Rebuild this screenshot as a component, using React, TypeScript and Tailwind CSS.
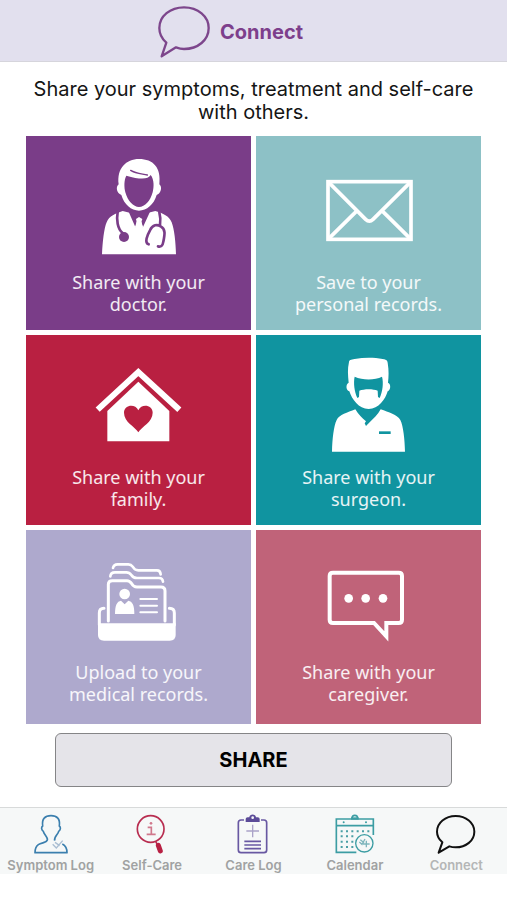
import { useState, type ReactNode } from "react";

type Tile = { label: [string, string]; color: string; icon: ReactNode };

function DoctorIcon() {
  return (
    <svg aria-hidden="true" viewBox="-36 15 363 363" className="h-[121px] w-[121px]">
      <path
        fill="#fff"
        fillRule="evenodd"
        d="M86 118C80 70 108 42 147 42C190 42 214 68 208 118C216 124 214 140 206 146L200 150C192 178 170 197 147 197C124 197 102 178 94 150L88 146C79 140 78 124 86 118ZM109 92C102 104 102 126 106 142C113 168 130 186 147 186C165 186 181 168 188 142C192 126 193 104 182 90C174 104 150 104 109 92Z"
      />
      <path
        fill="#fff"
        d="M36 328C38 290 42 250 50 232C58 212 76 206 98 198L122 204L147 240L172 204L196 198C222 206 238 214 245 232C253 254 257 290 258 328Z"
      />
      <path fill="#7a3d88" d="M116 200L137 248L140 228L135 218H159L154 228L158 248L180 200L147 199Z" />
      <path fill="#fff" d="M138 222L147 216L157 222L154 231L160 248H134L140 231Z" />
      <g fill="none" stroke="#7a3d88" strokeWidth="8" strokeLinecap="round">
        <path d="M122 76C138 86 154 86 172 90" strokeWidth="4" />
        <path d="M83 200C79 224 82 252 98 264" />
        <path d="M208 202C212 216 212 226 210 240" />
        <path d="M176 298C162 294 172 270 180 256C188 238 202 238 212 244C228 252 224 270 220 290C218 304 212 306 204 304" />
      </g>
      <circle cx="102" cy="276" r="15" fill="#7a3d88" />
    </svg>
  );
}

function EnvelopeIcon() {
  return (
    <svg
      aria-hidden="true"
      viewBox="-21 -45 363 363"
      className="h-[121px] w-[121px]"
      fill="none"
      stroke="#fff"
      strokeWidth="11"
    >
      <rect x="39" y="50" width="249" height="173" />
      <path d="M42 53L152 163Q163 174 174 163L285 53M42 220L124 139M285 220L203 139" />
    </svg>
  );
}

function HouseIcon() {
  return (
    <svg aria-hidden="true" viewBox="-21 -18 363 351" className="h-[117px] w-[121px]">
      <path fill="none" stroke="#fff" strokeWidth="18" d="M38 164L160 51L283 164" />
      <path fill="#fff" d="M67 168L160 80L253 168V259H67Z" />
      <path
        fill="#b92041"
        d="M160 232C150 214 117 202 117 173C117 150 150 144 160 166C170 144 203 150 203 173C203 202 170 214 160 232Z"
      />
    </svg>
  );
}

function SurgeonIcon() {
  return (
    <svg aria-hidden="true" viewBox="-36 -3 363 351" className="h-[117px] w-[121px]">
      <path
        fill="#fff"
        fillRule="evenodd"
        d="M86 98C84 76 82 58 87 36C88 30 92 29 104 27C132 22 162 22 188 27C200 29 202 32 203 38C207 62 206 80 204 98C214 103 212 120 203 124C196 148 176 177 146 177C116 177 96 148 88 124C77 120 77 103 86 98ZM104 80C100 98 103 124 112 144L117 141L118 122C132 116 160 116 173 122L174 141L179 144C188 124 191 98 186 80C164 91 128 91 104 80Z"
      />
      <path
        fill="#fff"
        d="M36 305C37 268 41 228 50 210C58 194 82 188 106 178C116 194 126 204 138 214L134 220L138 228L146 220C160 206 174 194 182 178C206 187 232 194 241 210C250 228 254 268 255 305Z"
      />
      <path stroke="#1094a0" strokeWidth="8" d="M177 248H212" />
    </svg>
  );
}

function FoldersIcon() {
  return (
    <svg aria-hidden="true" viewBox="-21 -33 363 351" className="h-[117px] w-[121px]">
      <g fill="none" stroke="#fff" strokeWidth="8" strokeLinecap="round" strokeLinejoin="round">
        <path d="M84 39Q86 28 98 28H130Q138 28 144 36Q149 46 160 46H216Q226 46 227 58" />
        <path d="M76 64Q77 52 90 52H124Q133 52 139 60Q144 69 156 69H222Q233 69 234 80" />
        <path d="M70 198V88Q70 77 82 77H126Q134 77 140 86Q145 96 156 96H228Q240 96 240 108V198" strokeWidth="9" />
        <path d="M57 160Q43 160 43 174V210M253 160Q268 160 268 174V210" strokeWidth="9" />
        <path d="M166 132H216M166 152H216M166 172H216" strokeWidth="6" />
      </g>
      <path fill="#fff" d="M39 205H272V240Q272 257 254 257H57Q39 257 39 240Z" />
      <circle cx="119" cy="117" r="16" fill="#fff" />
      <path fill="#fff" d="M90 177C90 150 96 139 108 137L119 148L130 137C142 139 148 150 148 177Z" />
    </svg>
  );
}

function MessageIcon() {
  return (
    <svg aria-hidden="true" viewBox="-21 -48 363 351" className="h-[117px] w-[121px]">
      <path
        fill="none"
        stroke="#fff"
        strokeWidth="12"
        d="M54 38H251Q261 38 261 48V179Q261 189 251 189H214V229L177 189H54Q44 189 44 179V48Q44 38 54 38Z"
      />
      <g fill="#fff">
        <circle cx="101" cy="115" r="13" />
        <circle cx="152" cy="115" r="13" />
        <circle cx="204" cy="115" r="13" />
      </g>
    </svg>
  );
}

const tiles: Tile[] = [
  { label: ["Share with your", "doctor."], color: "bg-[#7a3d88]", icon: <DoctorIcon /> },
  { label: ["Save to your", "personal records."], color: "bg-[#8dc1c6]", icon: <EnvelopeIcon /> },
  { label: ["Share with your", "family."], color: "bg-[#b92041]", icon: <HouseIcon /> },
  { label: ["Share with your", "surgeon."], color: "bg-[#1094a0]", icon: <SurgeonIcon /> },
  { label: ["Upload to your", "medical records."], color: "bg-[#aea9cd]", icon: <FoldersIcon /> },
  { label: ["Share with your", "caregiver."], color: "bg-[#c06379]", icon: <MessageIcon /> },
];

const tabs: { label: string; icon: ReactNode }[] = [
  {
    label: "Symptom Log",
    icon: (
      <svg aria-hidden="true" viewBox="92 42 120 120" className="size-10" fill="none">
        <path
          stroke="#3b7fae"
          strokeWidth="5"
          strokeLinejoin="round"
          d="M163 122C160 110 173 104 175 94C181 90 182 82 177 78C180 56 170 47 152 47C134 47 124 56 127 78C122 82 123 90 129 94C131 104 144 112 141 120C138 129 124 127 114 134C106 140 104 148 104 158H200C200 148 198 138 186 132"
        />
        <path stroke="#a9bdd2" strokeWidth="4" d="M157 133L168 144L187 122M164 127L178 137" />
      </svg>
    ),
  },
  {
    label: "Self-Care",
    icon: (
      <svg aria-hidden="true" viewBox="396 42 120 120" className="size-10" fill="none">
        <circle cx="452" cy="87" r="40" stroke="#b82d50" strokeWidth="5" />
        <path stroke="#b82d50" strokeWidth="5" d="M467 124L472 134" />
        <path stroke="#b82043" strokeWidth="15" strokeLinecap="round" d="M475 136L481 153" />
        <path stroke="#d0788c" strokeWidth="5" d="M443 82H454V103M440 103H467" />
        <circle cx="453" cy="70" r="4" fill="#d0788c" />
      </svg>
    ),
  },
  {
    label: "Care Log",
    icon: (
      <svg aria-hidden="true" viewBox="-50 42 120 120" className="size-10" fill="none">
        <path stroke="#6858a2" strokeWidth="5" d="M-17 60H-26Q-34 60-34 68V150Q-34 158-26 158H43Q51 158 51 150V68Q51 60 43 60H34" />
        <path fill="#5b4b98" fillRule="evenodd" d="M-12 66V57Q-12 52-6 52H-1C0 41 18 41 19 52H24Q30 52 30 57V66ZM5 53A4 4 0 1 0 13 53A4 4 0 1 0 5 53Z" />
        <path stroke="#aaa3c8" strokeWidth="4" d="M9 74V112M-10 93H28" />
        <path stroke="#6858a2" strokeWidth="5" d="M-16 124H34M-16 135H34M-16 146H34" />
      </svg>
    ),
  },
  {
    label: "Calendar",
    icon: (
      <svg aria-hidden="true" viewBox="255 42 120 120" className="size-10" fill="none">
        <g stroke="#3c9da3" strokeWidth="5">
          <path d="M319 157H259V57H370V105M259 77H370" />
          <circle cx="343" cy="130" r="26" strokeWidth="4" />
          <path d="M306 56C306 43 323 43 323 56" />
        </g>
        <path fill="#3c9da3" d="M303 52H326V59H303Z" />
        <circle cx="281" cy="67" r="3" fill="#3c9da3" />
        <circle cx="348" cy="67" r="3" fill="#3c9da3" />
        <g stroke="#4b9fa5" strokeWidth="6" strokeDasharray="6 10">
          <path d="M272 94H360M272 109H318M272 125H312M272 141H312" />
        </g>
        <path stroke="#7fb6bd" strokeWidth="4" d="M328 126L336 133L345 117M331 119L342 128M349 122V142M339 132H359" />
      </svg>
    ),
  },
  {
    label: "Connect",
    icon: (
      <svg aria-hidden="true" viewBox="559 42 120 120" className="size-10" fill="none">
        <path
          stroke="#111"
          strokeWidth="6"
          strokeLinejoin="round"
          d="M578 127C566 116 562 108 562 95C562 68 587 48 618 48C649 48 674 68 674 95C674 122 649 142 618 142C610 142 605 141 599 139L567 158Z"
        />
      </svg>
    ),
  },
];

export default function App() {
  const [active, setActive] = useState("Connect");

  return (
    <div className="bg-white font-['Inter',sans-serif] text-[#151515]">
      <header className="flex h-[62px] items-center justify-center gap-[10px] border-b border-[#d6d5dc] bg-[#e2e0ee] pt-[3px] pr-[46px]">
        <svg aria-hidden="true" viewBox="474 18 156 156" className="size-[52px]" fill="none">
          <path
            stroke="#7d468c"
            strokeWidth="7"
            strokeLinejoin="round"
            d="M499 128C484 115 478 102 478 84C478 48 511 22 552 22C594 22 626 49 626 84C626 120 594 147 552 147C543 147 536 145 528 142L485 169Z"
          />
        </svg>
        <h1 className="text-[20px] font-bold text-[#7d3f8c]">Connect</h1>
      </header>

      <main className="px-[26px]">
        <p className="pt-4 pb-3 text-center text-[20px] leading-[23px]">
          Share your symptoms, treatment and self-care with others.
        </p>

        <div className="grid grid-cols-2 grid-rows-[194px_190px_194px] gap-[5px]">
          {tiles.map(({ label, color, icon }) => (
            <button
              key={label.join(" ")}
              type="button"
              className={`flex flex-col items-center justify-start pt-[14px] font-['Noto_Sans',sans-serif] text-[18px] leading-[22px] text-white/90 ${color}`}
            >
              {icon}
              <span>
                {label[0]}
                <br />
                {label[1]}
              </span>
            </button>
          ))}
        </div>

        <div className="px-[29px] pt-[9px]">
          <button
            type="button"
            className="h-[54px] w-full rounded-md border border-[#858587] bg-[#e5e4e9] text-[20px] font-bold text-black"
          >
            SHARE
          </button>
        </div>
      </main>

      <nav aria-label="Main" className="mt-5 border-t border-[#d8dada] bg-[#f6f8f8] pt-[6px]">
        <ul className="grid grid-cols-5">
          {tabs.map(({ label, icon }) => (
            <li key={label}>
              <button
                type="button"
                aria-current={active === label ? "page" : undefined}
                onClick={() => setActive(label)}
                className={`flex w-full flex-col items-center gap-[2px] text-[13px] leading-[18px] font-semibold whitespace-nowrap ${
                  active === label ? "text-[#b4b6b6]" : "text-[#a0a2a2]"
                }`}
              >
                {icon}
                {label}
              </button>
            </li>
          ))}
        </ul>
      </nav>
    </div>
  );
}
